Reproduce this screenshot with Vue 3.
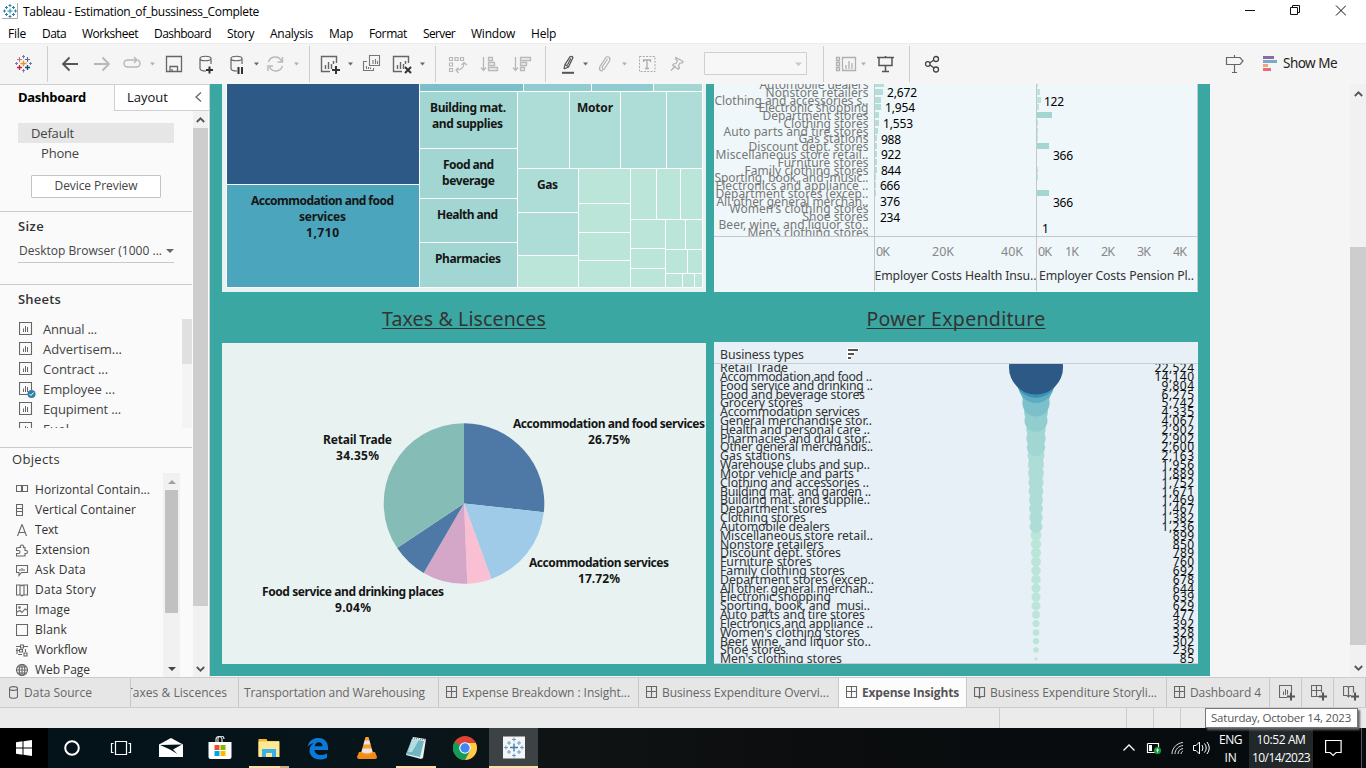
<script setup>
// v-fit="n" tracks a label out (or in) so that it spans n pixels
const vFit = {
  mounted(el, { value }) {
    const natural = el.getBoundingClientRect().width
    el.style.letterSpacing = (value - natural) / el.textContent.length + 'px'
  },
}

const menus = [
  ['File', 18], ['Data', 24], ['Worksheet', 56], ['Dashboard', 57], ['Story', 27], ['Analysis', 43],
  ['Map', 24], ['Format', 38], ['Server', 32], ['Window', 44], ['Help', 25],
]

const plus = (x, y, c, s = 1.6) => `<path d="M${x - 2.5} ${y}h5M${x} ${y - 2.5}v5" stroke="${c}" stroke-width="${s}"/>`
const logo = `<g fill="none"><path d="M5.500 9.500h6M8.500 6.500v6" stroke="#eb912c" stroke-width="1.400"/>
${plus(4.5, 5.5, '#c8707e', 1.1)}${plus(12.5, 5.5, '#5c6692', 1.1)}${plus(4.5, 13.5, '#c72035', 1.3)}${plus(12.5, 13.5, '#1f447e', 1.3)}
<path d="M8.500 1v3.500M7 2.500h3M8.500 15v3.500M7 16.500h3M0 9.500h3M1.500 8v3M14 9.500h3M15.500 8v3" stroke="#6f7fa8"/></g>`
const cyl = '<path d="M1 4.500c0-3 11-3 11 0s-11 3-11 0v10c0 2 3 2.500 6 2.500M12 4.500V10" fill="none" stroke="#666" stroke-width="1.200"/>'
const chart = '<path d="M15.500 9V2.500H.500v15H9M4.500 11v4M7.500 8v7M10.500 10v5M12.500 7v3" fill="none" stroke="#666" stroke-width="1.400"/>'
const caret = (c) => `<path d="M0 8.500h5L2.500 11.500z" fill="${c}"/>`
const line = '<path d="M.500-8v36" stroke="#cfcfcf"/>'
const tools = [
  logo,
  line,
  '<path d="M16 10H1M7.500 3.500L1 10l6.500 6.500" fill="none" stroke="#555" stroke-width="1.800"/>',
  '<path d="M0 10h15M8.500 3.500L15 10l-6.500 6.500" fill="none" stroke="#b8b8b8" stroke-width="1.800"/>',
  '<path d="M7 6H4.500a3.500 3.500 0 0 0 0 7h9a3.500 3.500 0 0 0 3.500-3.500q0-2.500-2-3.500M7 6h7M11 3l3 3-3 3" fill="none" stroke="#b8b8b8" stroke-width="1.400"/>',
  caret('#b0b0b0'),
  '<path d="M.500 2.500h15v15H.500zM4 17v-4.500h7.500V17M6 15v2" fill="none" stroke="#666" stroke-width="1.300"/>',
  cyl + '<path d="M7 16h7M10.500 12.500v7" stroke="#333" stroke-width="2"/>',
  cyl + '<path d="M8.500 13v7M12 13v7" stroke="#333" stroke-width="2"/>',
  caret('#666'),
  '<path d="M1.500 8a7 7 0 0 1 13-1M15.500 12a7 7 0 0 1-13 1M15.500 3v5h-5M1 17v-5h5" fill="none" stroke="#b8b8b8" stroke-width="1.400"/>',
  caret('#b0b0b0'),
  line,
  chart + '<path d="M11 16h8M15 12v8" stroke="#333" stroke-width="2"/>',
  caret('#666'),
  '<path d="M6.500 1.500h10v10h-10zM4 7.500H.500v9h10V14M3.500 12v3M5.500 13v2M7.500 13.500V15M10 6v4M12.500 5v5M14.500 7v3" fill="none" stroke="#777" stroke-width="1.100"/>',
  chart + '<path d="M12 13l6 6M18 13l-6 6" stroke="#333" stroke-width="2"/>',
  caret('#666'),
  line,
  '<g fill="none" stroke="#b8b8b8" stroke-width="1.200"><path d="M.500 3.500h3v3h-3zM6 3.500h3v3H6zM11.500 3.500h3v3h-3zM.500 9h3v3h-3zM.500 14.500h3v3h-3zM7 16c5 0 8-2 8-7M9.500 13.500L7 16l2.500 3M12.500 11L15 8.500l3 2.500"/></g>',
  '<path d="M2.500 3v13M0 13.500l2.500 3 2.500-3M7.500 3.500h4v3h-4zM7.500 8.500h6v3h-6zM7.500 13.500h9v3h-9z" fill="none" stroke="#b8b8b8" stroke-width="1.300"/>',
  '<path d="M2.500 3v13M0 13.500l2.500 3 2.500-3M7.500 3.500h10v3h-10zM7.500 8.500h6v3h-6zM7.500 13.500h4v3h-4z" fill="none" stroke="#b8b8b8" stroke-width="1.300"/>',
  line,
  '<path d="M0 18.800h12" stroke="#555" stroke-width="2"/><path d="M2 15l1-4.500L8 2.800q2-1 3 .8L6.500 13 2 15M3 10.500l3.500 2.300M8.800 4.500L5.500 11" fill="none" stroke="#555" stroke-width="1.200"/>',
  caret('#666'),
  '<path d="M8.500 5L3.500 12.500q-1 3 1.500 3L10.500 7c1.500-3-1.500-6-4-3L1 12.500c-1.500 3 .5 5 3 4" fill="none" stroke="#b0b0b0" stroke-width="1.200"/>',
  caret('#b0b0b0'),
  '<path d="M.500 2.500h15.500v15H.500z" fill="none" stroke="#aaa" stroke-dasharray="2 1.300"/><path d="M4.500 8V6h7v2M8 6v8M6 14.500h4" fill="none" stroke="#aaa" stroke-width="1.300"/>',
  '<path d="M5 3.500l7 4-.5 1.500-2.500 0-1.500 2.500 1 2.500-1.300 1.300-5.500-4L2.500 10 5 9.500 6.500 6.500 4.500 5zM4.500 12L0 16.500" fill="none" stroke="#b0b0b0" stroke-width="1.200"/>',
  '<path d="M.500-1.500h102v22H.500z" fill="#f7f7f7" stroke="#cfcfcf"/><path d="M91 8.500h7L94.500 12z" fill="#c8c8c8"/>',
  line,
  '<path d="M.500 3.500h3v3h-3zM.500 8.500h3v3h-3zM.500 13.500h3v3h-3zM6.500 3.500h13v13h-13zM10 11v4M13 7v8M16 9v6" fill="none" stroke="#b0b0b0" stroke-width="1.300"/>',
  caret('#b0b0b0'),
  '<path d="M0 3.500h17M2 3.500v8h13v-8M8.500 2v2M8.500 12v5M5 17.500h7" fill="none" stroke="#555" stroke-width="1.500"/>',
  line,
  '<g fill="none" stroke="#444" stroke-width="1.300"><circle cx="2.800" cy="10" r="2.300"/><circle cx="11" cy="5" r="2.500"/><circle cx="11" cy="15.500" r="2.500"/><path d="M5 8.800L9 6M5 11l4 3"/></g>',
  '<path d="M.500 3.500H14l3 3.500-3 3.500H.500zM8.500 1v2M8.500 11v7M6 18.500h5" fill="none" stroke="#666" stroke-width="1.200"/>',
]

const bars = '<path d="M.500.500h12v12H.500z" fill="none" stroke="#666" stroke-width="1.100"/><path d="M4.500 6.500V10M6.500 4v6M8.500 5v5" stroke="#666" fill="none"/>'
const grid = '<path d="M.500.500h10v11H.500zM5.500.500v11M.500 5.500h10" fill="none" stroke="#666" stroke-width="1.100"/>'
const book = '<path d="M.500 1.500l4 0 1 1 1-1h4v9h-3.500l-1.500 1.500-1.500-1.500H.500zM5.500 2.500v9" fill="none" stroke="#666" stroke-width="1.200"/>'

const sheets = [['Annual ...', 54], ['Advertisem...', 79], ['Contract ...', 65], ['Employee ...', 72], ['Equpiment ...', 78], ['Fuel ...', 41]]
const objects = [
  ['Horizontal Contain...', 115, '<path d="M.500 1.500h5v6h-5zM6.500 1.500h5v6h-5z"/>'],
  ['Vertical Container', 101, '<path d="M.500.500h6v4h-6zM.500 7.500h6v4h-6zM.500 5v2M6.500 5v2"/>'],
  ['Text', 23, '<path d="M1.500 12L5.800.800h.4L10.500 12M3 8.500h6"/>'],
  ['Extension', 55, '<path d="M3 3.500h1.500a1.700 1.700 0 1 1 3 0H9v3h1a1.500 1.500 0 1 1 0 3H9v2.500H.500V9.500h2a1.500 1.500 0 0 0 0-3h-2V4z"/>'],
  ['Ask Data', 51, '<path d="M.500 1.500h11v7H5.500L3 11.500v-3H.500zM4 5v2M6 4v3M8 5v2"/>'],
  ['Data Story', 61, '<path d="M.500 1h4.500l1 .8 1-.8h4.500v10H7l-1 1-1-1H.500zM4 1.500v9M8 1.500v9"/>'],
  ['Image', 35, '<path d="M.500.500h11v11H.500zM1 8l3-1.500 2 2L9 5l2 1"/><circle cx="3.500" cy="3.500" r=".7"/>'],
  ['Blank', 32, '<path d="M.500.500h11v11H.500z"/>'],
  ['Workflow', 52, '<path d="M0 2.500h4M8 2.500h4M0 6.500h3M2 10.500h4M4.500 1h3v3h-3zM3.500 5.500h3v2.500h-3zM8 9h3v3H8zM9.500 5v3M1 4v6"/>'],
  ['Web Page', 55, '<circle cx="6" cy="6" r="5.500"/><ellipse cx="6" cy="6" rx="2.800" ry="5.500"/><path d="M.500 6h11M1.500 3h9M1.500 9h9M6 .500v11"/>'],
]

// Treemap cells: left, top, right, bottom, fill
const A = '#a2d6d2', B = '#aedcd6', C = '#bce5d9'
const cells = [
  [227, 84, 419, 184, '#2c5985'], [227, 185, 419, 287, '#4ba5bc'],
  [420, 84, 523, 91, '#7bbfcb'], [524, 84, 591, 91, '#8fcccf'], [592, 84, 653, 91, '#8fcccf'], [654, 84, 702, 91, A],
  [420, 92, 517, 148, A], [420, 149, 517, 198, A], [420, 199, 517, 242, A], [420, 243, 517, 287, A],
  [518, 92, 569, 168, B], [570, 92, 620, 168, B], [621, 92, 666, 168, B], [667, 92, 702, 168, B],
  [518, 169, 578, 212, B], [518, 213, 578, 255, B], [518, 256, 578, 287, C],
  [579, 169, 630, 203, C], [579, 204, 630, 232, C], [579, 233, 630, 260, C], [579, 261, 630, 287, C],
  [631, 169, 656, 219, C], [657, 169, 680, 219, C], [681, 169, 702, 219, C],
  [631, 220, 665, 248, C], [631, 249, 665, 268, C], [631, 269, 665, 287, C],
  [666, 220, 685, 249, C], [686, 220, 702, 249, C], [666, 250, 687, 273, C], [688, 250, 702, 273, C],
  [666, 274, 682, 287, C], [683, 274, 694, 287, C], [695, 274, 702, 287, C],
]
const cellLabels = [
  ['Accommodation and food', 251, 205, 143], ['services', 299, 221, 47], ['1,710', 306, 237, 33],
  ['Building mat.', 430, 112, 76], ['and supplies', 432, 128, 71], ['Food and', 443, 169, 51], ['beverage', 442, 185, 53],
  ['Health and', 437, 219, 61], ['Pharmacies', 435, 263, 66], ['Motor', 577, 112, 36], ['Gas', 537, 189, 21],
]

const costRows = [
  ['Automobile dealers', 109, 9, 1], ['Nonstore retailers', 103, 8, 3], ['Clothing and accessories s..', 154, 6, 4],
  ['Electronic shopping', 110, 6, 2], ['Department stores', 106, 4, 15], ['Clothing stores', 85, 4, 1],
  ['Auto parts and tire stores', 145, 3, 1], ['Gas stations', 70, 2, 1], ['Discount dept. stores', 120, 2, 12],
  ['Miscellaneous store retail..', 153, 2, 0], ['Furniture stores', 91, 2, 0], ['Family clothing stores', 124, 2, 1],
  ['Sporting, book, and  music..', 154, 1, 1], ['Electronics and appliance ..', 153, 1, 0], ['Department stores (excep..', 153, 1, 12],
  ['All other general merchan..', 152, 0, 0], ["Women's clothing stores", 139, 0, 0], ['Shoe stores', 66, 0, 0],
  ['Beer, wine, and liquor sto..', 150, 0, 0], ["Men's clothing stores", 121, 0, 0],
]
const costY = (i) => Math.round(89.1 + 7.77 * i)
const marks = [
  ['2,672', 887, 96.5, 30], ['1,954', 885, 111.5, 30], ['1,553', 883, 127.5, 30], ['988', 881, 143.5, 20], ['922', 881, 158.5, 20],
  ['844', 881, 174.5, 20], ['666', 880, 189.5, 20], ['376', 880, 205.5, 20], ['234', 880, 221.5, 20],
  ['122', 1044, 105.5, 20], ['366', 1053, 159.5, 20], ['366', 1053, 206.5, 20], ['1', 1042, 232.5, 7],
]
const ticks = [['0K', 876, 14], ['20K', 932, 22], ['40K', 1001, 22], ['0K', 1038, 14], ['1K', 1065, 14], ['2K', 1101, 14], ['3K', 1137, 14], ['4K', 1173, 14]]

const slices = [[26.75, '#4e79a7'], [17.72, '#a0cbe8'], [4.87, '#fabfd2'], [9.04, '#d4a6c8'], [7.27, '#4e79a7'], [34.35, '#86bcb6']]
const point = (p) => [464 + 80.3 * Math.sin(p * Math.PI / 50), 503.5 - 80.3 * Math.cos(p * Math.PI / 50)].join(' ')
let sum = 0
const pie = slices.map(([v, fill]) => {
  const d = `M464 503.500L${point(sum)}A80.300 80.300 0 0 1 ${point(sum + v)}z`
  sum += v
  return { d, fill }
})
const pieLabels = [
  ['Accommodation and food services', 513, 428, 192], ['26.75%', 588, 444, 42], ['Retail Trade', 323, 444, 69], ['34.35%', 336, 460, 43],
  ['Accommodation services', 529, 567, 140], ['17.72%', 578, 583, 42], ['Food service and drinking places', 262, 596, 182], ['9.04%', 335, 612, 36],
]

const power = [
  ['Retail Trade', 68, 22524], ['Accommodation and food ..', 152, 14140], ['Food service and drinking ..', 153, 9804],
  ['Food and beverage stores', 145, 6275], ['Grocery stores', 83, 5742], ['Accommodation services', 140, 4335],
  ['General merchandise stor..', 152, 4067], ['Health and personal care ..', 150, 2902], ['Pharmacies and drug stor..', 151, 2902],
  ['Other general merchandis..', 153, 2600], ['Gas stations', 71, 2163], ['Warehouse clubs and sup..', 150, 1956],
  ['Motor vehicle and parts', 134, 1889], ['Clothing and accessories ..', 149, 1752], ['Building mat. and garden ..', 151, 1671],
  ['Building mat. and supplie..', 150, 1469], ['Department stores', 107, 1467], ['Clothing stores', 86, 1382], ['Automobile dealers', 110, 1236],
  ['Miscellaneous store retail..', 153, 899], ['Nonstore retailers', 104, 850], ['Discount dept. stores', 121, 789], ['Furniture stores', 92, 760],
  ['Family clothing stores', 125, 692], ['Department stores (excep..', 154, 678], ['All other general merchan..', 153, 644],
  ['Electronic shopping', 111, 639], ['Sporting, book, and  musi..', 150, 629], ['Auto parts and tire stores', 145, 477],
  ['Electronics and appliance ..', 153, 392], ["Women's clothing stores", 140, 328], ['Beer, wine, and liquor sto..', 151, 302],
  ['Shoe stores', 66, 236], ["Men's clothing stores", 122, 85],
]
const powerY = (i) => Math.round(372.1 + 8.82 * i)
const digits = (v) => v.toLocaleString('en-US')
const digitsWidth = (v) => String(v).length * 7.1 + (v > 999 ? 4 : 0)
const shade = (v) => v > 20000 ? '#2c5985' : v > 14000 ? '#3a8fb5' : v > 9000 ? '#5cacc2' : v > 5000 ? '#7cc0cb' : v > 4000 ? '#92cecf' : v > 2500 ? A : v > 1000 ? B : C
const bubbles = power.map(([, , v], i) => ({ cy: 367.5 + 8.83 * i, r: 0.18 * Math.sqrt(v), fill: shade(v) })).reverse()

const tabs = [
  ['Transportation and Warehousing', 181, null], ['Expense Breakdown : Insight...', 168, grid], ['Business Expenditure Overvi...', 167, grid],
  ['Expense Insights', 97, grid], ['Business Expenditure Storyli...', 167, book], ['Dashboard 4', 71, grid],
]
const news = [bars, grid, book]

const apps = [
  '<path fill="#fff" d="M4 6.300L10.500 5.300V11.500H4zM11.500 5.200L20 4v7.500h-8.500zM4 12.500h6.500v6.200L4 17.800zM11.500 12.500H20V20l-8.500-1.200z"/>',
  '<circle cx="12" cy="12" r="6.800" fill="none" stroke="#fff" stroke-width="2"/>',
  '<path d="M6.500 5.500h11v13h-11zM4.500 7.500h-2v9h2M19.500 7.500h2v9h-2" fill="none" stroke="#fff" stroke-width="1.200"/>',
  '<path fill="#fff" d="M0 8.500L12 2l12 6.500V21H0z"/><path fill="#07141a" d="M1 9l22-.5-9 5 4.500 4.500L11 13.500z"/>',
  '<path d="M8 7V3.500a3 3 0 0 1 6 0V7M10 6V3a3 3 0 0 1 6 0" fill="none" stroke="#ddd" stroke-width="1.200"/><path fill="#fff" d="M.500 6h23v15q0 2-2 2h-19q-2 0-2-2z"/><path fill="#f25022" d="M6.500 9h5v5h-5z"/><path fill="#7fba00" d="M12.500 9h5v5h-5z"/><path fill="#00a4ef" d="M6.500 15h5v5h-5z"/><path fill="#ffb900" d="M12.500 15h5v5h-5z"/>',
  '<path fill="#f5bf24" d="M1.500 3h8l1 2H22v15H1.500z"/><path fill="#ffe798" d="M1.500 5.500h21V21h-21z"/><path fill="#35b2e6" d="M5 13h14v8h-4v-4H9v4H5z"/>',
  '<path fill="#0a79d8" d="M1.500 11C3 4.500 7 2 12.500 2 19 2 22 6.500 22 11.500V14H8.500c.3 3.500 3 5 6.500 5 2.500 0 4.500-.7 6-1.800v4.500C19.500 22.700 17 23.500 14 23.500 7 23.500 3.500 19 3.500 14.500 3.500 11 5.500 8.500 8 7.300 5 7.700 3 9 1.500 11zM8.700 10.300h7.800C16.500 7.500 15 6.300 12.800 6.300S9 8 8.700 10.300z"/>',
  '<path fill="#f18b15" d="M4 16h16l2 5q0 2-2 2H4q-2 0-2-2z"/><path fill="#ff9d2e" d="M10.500 1h3L18 17q-6 4-12 0z"/><path fill="#e6e6e6" d="M9.700 4.500h4.600l1.200 4h-7zM7.500 12.500h9l1 3.500q-5.500 2.500-11 0z"/>',
  '<path fill="#e7eff0" d="M9 1l13 2-3 19-2 1L2 19z"/><path fill="#70b6c0" d="M8 3l12 2-4 16L2 18z"/><path fill="#b3dde1" d="M8 3l7 1-7 12-4 0z"/><path d="M8 2l14 2" stroke="#777" stroke-dasharray="1 1"/>',
  '<circle cx="12" cy="12" r="12" fill="#db4437"/><path fill="#0f9d58" d="M12 12L1.600 6A12 12 0 0 0 12 24l5-9z"/><path fill="#ffcd40" d="M12 7h10.900A12 12 0 0 1 12 24l5.500-10z"/><circle cx="12" cy="12" r="5.800" fill="#fff"/><circle cx="12" cy="12" r="4.700" fill="#4285f4"/>',
  `<path fill="#f3f5f7" d="M1 .500h22v22H1z"/><g fill="none"><path d="M8 11.500h8M12 7.500v8" stroke="#3d7ea6" stroke-width="1.400"/>${[[7, 7], [17, 7], [7, 16], [17, 16], [12, 3.5], [12, 19.5], [4, 11.5], [20, 11.5]].map(([x, y]) => `<path d="M${x - 2} ${y}h4M${x} ${y - 2}v4" stroke="#6b9dbf"/>`).join('')}</g>`,
]
</script>

<template>
  <div class="screen">
    <header class="titlebar">
      <svg class="appicon" viewBox="0 0 16 16" width="16" height="16">
        <path d="M8 5.500v5M5.500 8h5M8 1v3M6.500 2.500h3M8 12v3M6.500 13.500h3M2.500 6.500v3M1 8h3M13.500 6.500v3M12 8h3M4.500 3v3M3 4.500h3M11.500 3v3M10 4.500h3M4.500 10v3M3 11.500h3M11.500 10v3M10 11.500h3" stroke="#2d83a8" />
        <path d="M0 15.500h15.500V0" fill="none" stroke="#aaa" />
      </svg>
      <span v-fit="236" class="fit">Tableau - Estimation_of_bussiness_Complete</span>
      <svg class="controls" viewBox="0 0 110 23" width="110" height="23" fill="none" stroke="#111">
        <path d="M9 10.500h10M54.500 7.500h7v7h-7zM56.500 7.500v-2h7v7h-2M100 5.500l10 10M110 5.500l-10 10" />
      </svg>
    </header>
    <nav class="menus"><span v-for="[t, w] in menus" :key="t" v-fit="w" class="fit">{{ t }}</span></nav>

    <div class="toolbar">
      <svg v-for="(t, i) in tools" :key="i" class="tool" width="20" height="20" v-html="t" />
      <div class="showme">
        <svg width="14" height="16"><path fill="#866fa0" d="M0 0h11v3H0z" /><path fill="#7fa7cd" d="M0 4h14v3H0z" /><path fill="#f5a47c" d="M0 8h5v3H0z" /><path fill="#f0687c" d="M0 12h8v3H0z" /></svg>
        <span v-fit="54" class="fit">Show Me</span>
      </div>
    </div>

    <main class="work">
      <aside class="side">
        <div class="panetabs">
          <div class="on"><b v-fit="68" class="fit">Dashboard</b></div>
          <div class="lay"><span v-fit="41" class="fit">Layout</span>
            <svg width="7" height="10" fill="none" stroke="#666" stroke-width="1.3"><path d="M6 .5L1 5l5 4.500" /></svg></div>
        </div>
        <div class="panebody">
          <div class="pane">
            <section class="device">
              <div class="def"><span v-fit="43" class="fit">Default</span></div>
              <div class="phone"><span v-fit="38" class="fit">Phone</span></div>
              <div class="preview"><span v-fit="83" class="fit">Device Preview</span></div>
            </section>
            <section class="size">
              <h3><span v-fit="26" class="fit">Size</span></h3>
              <div class="select"><span v-fit="143" class="fit">Desktop Browser (1000 ...</span><i class="down"></i></div>
            </section>
            <section class="sheets">
              <h3><span v-fit="43" class="fit">Sheets</span></h3>
              <div class="sheetbox">
                <ul>
                  <li v-for="([t, w], i) in sheets" :key="t">
                    <svg width="18" height="18" viewBox="0 -1 18 18"><g v-html="bars" />
                      <g v-if="i === 3"><circle cx="12.500" cy="12" r="4" fill="#2f7fa6" /><path d="M10.500 12l1.500 1.500 2.500-3" fill="none" stroke="#fff" /></g></svg>
                    <span v-fit="w" class="fit">{{ t }}</span>
                  </li>
                </ul>
                <div class="minibar"><i></i></div>
              </div>
            </section>
            <section class="objects">
              <h4><span v-fit="48" class="fit">Objects</span></h4>
              <div class="objbox">
                <ul>
                  <li v-for="[t, w, d] in objects" :key="t">
                    <svg width="13" height="13" fill="none" stroke="#666" stroke-width="1.100" v-html="d" />
                    <span v-fit="w" class="fit">{{ t }}</span>
                  </li>
                </ul>
                <div class="objscroll"><i class="up"></i><b></b><i class="down"></i></div>
              </div>
            </section>
          </div>
          <div class="sidescroll">
            <svg width="9" height="6"><path d="M.8 5L4.500 1.300 8.200 5" /></svg>
            <b></b>
            <svg width="9" height="6"><path d="M.8 1L4.500 4.700 8.200 1" /></svg>
          </div>
        </div>
      </aside>

      <div class="dash">
        <div class="col">
          <svg class="tree" viewBox="222 84 484 208" width="484" height="208">
            <rect x="226" y="84" width="477" height="204" fill="#fff" />
            <rect v-for="(c, i) in cells" :key="i" :x="c[0]" :y="c[1]" :width="c[2] - c[0]" :height="c[3] - c[1]" :fill="c[4]" />
            <text v-for="[t, x, y, w] in cellLabels" :key="t" class="bold" :x="x" :y="y" :textLength="w">{{ t }}</text>
          </svg>
          <h2><span v-fit="164" class="fit">Taxes &amp; Liscences</span></h2>
          <svg class="pie" viewBox="222 343 484 321" width="484" height="321">
            <path v-for="(s, i) in pie" :key="i" :d="s.d" :fill="s.fill" />
            <text v-for="[t, x, y, w] in pieLabels" :key="t" class="bold" :x="x" :y="y" :textLength="w">{{ t }}</text>
          </svg>
        </div>
        <div class="col">
          <svg class="costs" viewBox="714 84 484 208" width="484" height="208">
            <defs><clipPath id="rows"><path d="M714 84h484v152.500H714z" /></clipPath></defs>
            <g clip-path="url(#rows)">
              <g v-for="([t, w, h, p], i) in costRows" :key="t">
                <text class="grey" :x="868.5 - w" :y="costY(i)" :textLength="w">{{ t }}</text>
                <rect x="875" :y="costY(i) - 8" :width="h" height="6" fill="#b3dfd6" />
                <rect x="1037" :y="costY(i) - 8" :width="p" height="6" :fill="p > 9 ? '#a2d6d2' : '#bce5d9'" />
              </g>
            </g>
            <text v-for="([t, x, y, w], i) in marks" :key="i" class="mark" :x="x" :y="y" :textLength="w">{{ t }}</text>
            <path d="M714 236.500h484M874.500 84v207M1036.500 84v207M1197.500 84v207" stroke="#c4c8cc" />
            <text v-for="[t, x, w] in ticks" :key="x" class="tick" :x="x" y="256" :textLength="w">{{ t }}</text>
            <text class="label" x="874.5" y="280" textLength="162">Employer Costs Health Insu..</text>
            <text class="label" x="1039" y="280" textLength="155">Employer Costs Pension Pl..</text>
          </svg>
          <h2 class="short"><span v-fit="179" class="fit">Power Expenditure</span></h2>
          <svg class="power" viewBox="714 342 484 322" width="484" height="322">
            <defs><clipPath id="list"><path d="M714 364h484v299.500H714z" /></clipPath></defs>
            <text class="label" x="720" y="359" textLength="84">Business types</text>
            <path d="M847 348h12v3h-4v4h-4v5h-4z" fill="#fff" />
            <path d="M848 350h10M848 354h6M848 358h3" stroke="#555" stroke-width="2" />
            <g clip-path="url(#list)">
              <circle v-for="(b, i) in bubbles" :key="i" cx="1036" :cy="b.cy" :r="b.r" :fill="b.fill" />
              <g v-for="([t, w, v], i) in power" :key="t">
                <text class="label" x="720" :y="powerY(i)" :textLength="w">{{ t }}</text>
                <text class="num" :x="1194 - digitsWidth(v)" :y="powerY(i)" :textLength="digitsWidth(v)">{{ digits(v) }}</text>
              </g>
            </g>
            <path d="M714 363.500h484M714 663.500h484" stroke="#c9cdd2" />
          </svg>
        </div>
      </div>
      <div class="mainscroll">
        <svg width="9" height="6"><path d="M.8 5L4.500 1.300 8.200 5" /></svg>
        <b></b>
        <svg width="9" height="6"><path d="M.8 1L4.500 4.700 8.200 1" /></svg>
      </div>
    </main>

    <div class="tabs">
      <div class="source"><svg width="9" height="13" fill="none" stroke="#666" stroke-width="1.1"><path d="M.5 2.500c0-2.500 8-2.500 8 0s-8 2.500-8 0v8c0 2.300 8 2.300 8 0v-8" /></svg><span v-fit="68" class="fit">Data Source</span></div>
      <div class="clipped"><span v-fit="101" class="fit">Taxes &amp; Liscences</span></div>
      <div v-for="([t, w, ic], i) in tabs" :key="t" class="tab" :class="{ active: i === 3 }">
        <svg v-if="ic" width="12" height="13" v-html="ic" />
        <span v-fit="w" class="fit">{{ t }}</span>
      </div>
      <div v-for="(n, i) in news" :key="i" class="tab new">
        <svg width="17" height="16"><g v-html="n" /><path d="M8 11.500h8M12 7.500v8" stroke="#e6e6e6" stroke-width="4" /><path d="M8 11.500h8M12 7.500v8" stroke="#555" stroke-width="2" /></svg>
      </div>
    </div>
    <div class="status"><i></i><i></i><i></i><i></i></div>
    <div class="tooltip"><span v-fit="140" class="fit">Saturday, October 14, 2023</span></div>

    <footer class="taskbar">
      <div v-for="(a, i) in apps" :key="i" class="app" :class="'app' + i"><svg width="24" height="24" v-html="a" /></div>
      <div class="tray">
        <svg width="88" height="20" fill="none" stroke="#fff">
          <path d="M.5 12.500l5.500-5.500 5.500 5.500" stroke-width="1.300" />
          <path d="M24.500 5.500v9h9M24.500 5.500h11v4" stroke-width="1.200" /><path d="M26 7h3v6h-3z" fill="#fff" stroke="none" /><path d="M35.500 7v5" />
          <circle cx="34.500" cy="12.500" r="3.600" fill="#149b3b" stroke="none" /><path d="M34.500 10.500v4M33 12h3" stroke="#d5f5dd" />
          <path d="M49 16c0-6 5-11 11-11.500M52 16c0-5 4-8 8-8.500M55 16c0-3 2-5 5-5.500M58 16c0-1.500 1-2.500 2-3" stroke="#ddd" />
          <path d="M70.500 7.500h2.500l3.500-3.500v12L73 12.500h-2.500zM79 7q2 3 0 6M81.500 5.500q3.500 4.500 0 9M84 4q4.500 6 0 12" />
        </svg>
        <div class="lang"><span v-fit="23" class="fit">ENG</span><span v-fit="12" class="fit">IN</span></div>
        <div class="clock"><span v-fit="49" class="fit">10:52 AM</span><span v-fit="58" class="fit">10/14/2023</span></div>
        <div class="note"><svg width="17" height="18" fill="none" stroke="#fff" stroke-width="1.200"><path d="M.6 1.500h15.500v12h-5l-3 3-3-3H.6z" /></svg></div>
      </div>
    </footer>
  </div>
</template>

<style>
body { margin: 0; overflow: hidden; }
</style>

<style scoped>
.screen { position: relative; width: 1366px; height: 768px; overflow: hidden; background: #fff; color: #000; font: 12px "Open Sans", "Noto Sans", sans-serif; display: flex; flex-direction: column; }
.fit { display: inline-block; white-space: pre; }
h2, h3, h4, ul { margin: 0; padding: 0; list-style: none; }
svg { flex: none; display: block; }
text { font-family: "Noto Sans", "Open Sans", sans-serif; white-space: pre; }

.titlebar { height: 23px; display: flex; align-items: center; padding-left: 2px; }
.titlebar .fit { margin-left: 5px; }
.appicon { margin-top: -1px; }
.controls { margin: -1px 20px 0 auto; }
.menus { box-sizing: border-box; height: 20px; padding-top: 1px; display: flex; gap: 16px; padding-left: 8px; align-items: center; }
.menus .fit { line-height: 20px; }

.toolbar { box-sizing: border-box; height: 41px; background: #f5f5f5; border-top: 1px solid #ececec; padding-left: 15px; display: grid; align-items: center; grid-template-columns: 32px 15px 32px 29px 27px 16px 33px 31px 24px 13px 27px 15px 12px 27px 15px 30px 27px 15px 14px 32px 32px 32px 17px 21px 16px 23px 17px 32px 33px 119px 13px 25px 16px 32px 16px 301px 37px 1fr; }
.tool { overflow: visible; }
.showme { display: flex; align-items: center; gap: 6px; font-size: 13.500px; color: #222; font-family: "Noto Sans", sans-serif; }
.showme .fit { margin-top: -2px; }

.work { height: 593px; display: flex; background: #f5f5f5; }
.side { box-sizing: border-box; width: 210px; background: #fafafa; border-top: 1px solid #d0d0d0; border-right: 1px solid #d0d0d0; color: #444; display: flex; flex-direction: column; }
.panetabs { height: 26px; display: flex; font-size: 13px; color: #111; }
.panetabs .on { box-sizing: border-box; width: 114px; padding-left: 18px; line-height: 24px; color: #000; }
.lay { flex: 1; box-sizing: border-box; border-left: 1px solid #d0d0d0; border-bottom: 1px solid #d0d0d0; display: flex; align-items: center; justify-content: space-between; padding: 0 7px 1px 12px; background: #fff; }
.panebody { flex: 1; display: flex; min-height: 0; }
.pane { width: 192px; }
section { box-sizing: border-box; border-bottom: 1px solid #ccc; }
.device { height: 101px; padding: 12px 18px 0; }
.def { height: 20px; line-height: 20px; background: #e6e6e6; padding-left: 13px; font-size: 13px; }
.phone { height: 20px; line-height: 20px; padding-left: 23px; font-size: 13px; }
.preview { box-sizing: border-box; margin: 12px 13px 0; height: 23px; border: 1px solid #c4c4c4; border-radius: 1px; width: 130px; text-align: center; line-height: 20px; background: #fff; }
.size { height: 73px; padding: 4px 18px 0; }
h3 { font-size: 13px; font-weight: 600; color: #333; line-height: 20px; height: 20px; }
.select { height: 25px; padding-top: 1px; box-sizing: border-box; border-bottom: 1px solid #c8c8c8; display: flex; align-items: center; justify-content: space-between; padding-left: 1px; margin-top: 2px; }
.down { border: 4px solid transparent; border-top-color: #666; border-bottom: 0; }
.up { border: 4px solid transparent; border-bottom-color: #a0a0a0; border-top: 0; }
.sheets { height: 163px; padding-top: 4px; }
.sheets h3 { padding-left: 18px; }
.sheetbox { display: flex; margin-top: 10px; height: 109px; overflow: hidden; justify-content: space-between; }
.sheetbox li { height: 20px; display: flex; align-items: center; padding-left: 19px; gap: 6px; font-size: 13px; }
.sheetbox li svg { margin-top: 2px; }
.minibar { width: 10px; background: #f4f4f4; }
.minibar i { display: block; height: 45px; background: #e0e0e0; }
.objects { border: 0; padding-top: 1px; }
h4 { padding-left: 12px; font-size: 13px; font-weight: 500; line-height: 20px; color: #333; }
.objbox { display: flex; height: 206px; overflow: hidden; margin-top: 4px; justify-content: space-between; padding-right: 12px; }
.objbox ul { padding-top: 7px; }
.objbox li { height: 20px; display: flex; align-items: center; padding-left: 16px; gap: 6px; font-size: 12px; line-height: 20px; color: #333; }
.objscroll { width: 17px; background: #f1f1f1; display: flex; flex-direction: column; align-items: center; }
.objscroll .up { margin-top: 7px; }
.objscroll b { width: 13px; height: 123px; background: #c1c1c1; margin-top: 6px; }
.objscroll .down { margin-top: 54px; border-top-color: #444; }
.sidescroll { margin-left: 1px; width: 15px; background: #f1f1f1; display: flex; flex-direction: column; align-items: center; padding-top: 6px; }
.sidescroll b { width: 15px; height: 478px; background: #cdcdcd; margin: 5px 0 60px; }
.sidescroll path, .mainscroll path { fill: none; stroke: #555; stroke-width: 1.800; }

.dash { width: 976px; height: 592px; background: #3ba7a2; display: flex; gap: 8px; padding: 0 12px; }
.col { display: flex; flex-direction: column; }
.tree, .pie { background: #e8f3f1; }
.costs { background: #eff7fa; }
.power { background: #e6f0f6; }
h2 { height: 51px; text-align: center; font: 400 19.500px/54px "Noto Sans", sans-serif; color: #333; }
h2.short { height: 50px; }
h2 .fit { line-height: 21px; text-decoration: underline; text-decoration-thickness: 1px; text-underline-offset: 2px; text-decoration-skip-ink: none; }
.bold { font-size: 12px; font-weight: 700; fill: #161616; }
.grey { font-size: 12px; fill: #777; }
.mark { font-size: 12px; fill: #000; }
.num { font-size: 12px; fill: #111; }
.tick { font-size: 12.500px; fill: #888; }
.label { font-size: 12.300px; fill: #333; }
.mainscroll { margin-left: auto; width: 16px; background: #f1f1f1; display: flex; flex-direction: column; align-items: center; padding-top: 7px; }
.mainscroll b { width: 16px; height: 398px; background: #cdcdcd; margin: 150px 0 20px; }

.tabs { box-sizing: border-box; height: 31px; background: #e6e6e6; border-top: 1px solid #ccc; border-bottom: 1px solid #ccc; display: grid; grid-template-columns: 131px 108px 200px 200px 200px 128px 200px 103px 32px 32px 32px; color: #666; line-height: 29px; }
.tabs > div { box-sizing: border-box; border-right: 1px solid #c8c8c8; display: flex; align-items: center; overflow: hidden; min-width: 0; }
.source { gap: 6px; padding-left: 9px; }
.clipped { justify-content: flex-end; padding-right: 11px; }
.tab { padding-left: 7px; gap: 4px; }
.tabs > .tab:nth-child(3) { padding-left: 5px; }
.tabs > .active { background: #fcfcfc; font-weight: 700; color: #555; padding-bottom: 1px; }
.tab.new { padding-left: 9px; }
.status { height: 20px; background: #ebebeb; display: grid; grid-template-columns: 1000px 127px 27px 27px; }
.status i { border-right: 1px solid #ccc; }
.tooltip { position: absolute; left: 1205px; top: 708px; box-sizing: border-box; width: 153px; height: 20px; border: 1px solid #777; background: #fff; box-shadow: 2px 2px 2px #666; color: #555; line-height: 18px; padding-left: 5px; font-size: 11.500px; }

.taskbar { height: 40px; background: linear-gradient(90deg, #03121a, #08151a 30%, #101313 42%, #0b0d0e 60%, #050b0f); display: flex; color: #fff; }
.app { box-sizing: border-box; width: 49px; display: flex; align-items: center; justify-content: center; padding-bottom: 1px; }
.app0, .app1 { width: 48px; }
.app2 { width: 50px; }
.app0 { background: #000; }
.app0 { padding-bottom: 0; }
.app5 { background: linear-gradient(90deg, #fddcab 31px, #c9ae88 31px) 5px 38px / 40px 2px no-repeat; }
.app8 { background: linear-gradient(#fddcab, #fddcab) 5px 38px / 40px 2px no-repeat; }
.app10 { background: linear-gradient(#fddcab, #fddcab) 0 38px / 100% 2px no-repeat #3d4245; }
.tray { margin-left: auto; display: flex; align-items: center; }
.lang, .clock { display: flex; flex-direction: column; align-items: center; line-height: 18px; font-size: 12px; }
.lang { margin-left: 8px; }
.lang, .clock { box-sizing: border-box; height: 40px; padding-top: 3px; }
.clock { margin-left: 7px; width: 64px; background: #22282a; }
.note { width: 49px; height: 40px; display: flex; align-items: center; padding-left: 12px; box-sizing: border-box; background: #000; border-right: 1px solid #555; margin-right: 4px; }
</style>
